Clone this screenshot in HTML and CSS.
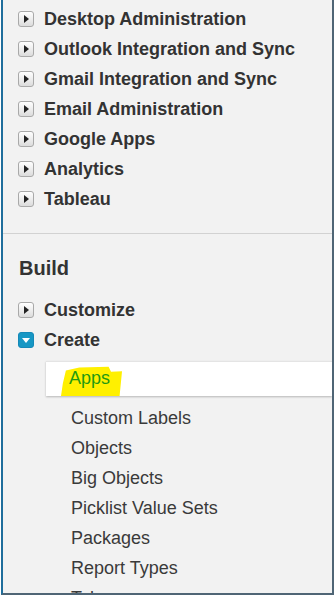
FILE: index.html
```html
<!DOCTYPE html>
<html lang="en">
<head>
    <meta charset="UTF-8">
    <meta name="viewport" content="width=device-width, initial-scale=1.0">
    <title>Setup Menu</title>
    <link rel="stylesheet" href="styles.css">
</head>
<body>
    <div class="panel">
        <ul class="tree">
            <li class="node"><span class="toggle"></span>Desktop Administration</li>
            <li class="node"><span class="toggle"></span>Outlook Integration and Sync</li>
            <li class="node"><span class="toggle"></span>Gmail Integration and Sync</li>
            <li class="node"><span class="toggle"></span>Email Administration</li>
            <li class="node"><span class="toggle"></span>Google Apps</li>
            <li class="node"><span class="toggle"></span>Analytics</li>
            <li class="node"><span class="toggle"></span>Tableau</li>
        </ul>

        <div class="divider"></div>

        <h2 class="group-title">Build</h2>

        <ul class="tree build">
            <li class="node"><span class="toggle"></span>Customize</li>
            <li class="node"><span class="toggle open"></span>Create</li>
        </ul>

        <ul class="sub-list">
            <li class="sub-item selected"><span class="marker">Apps</span></li>
            <li class="sub-item">Custom Labels</li>
            <li class="sub-item">Objects</li>
            <li class="sub-item">Big Objects</li>
            <li class="sub-item">Picklist Value Sets</li>
            <li class="sub-item">Packages</li>
            <li class="sub-item">Report Types</li>
            <li class="sub-item">Tabs</li>
        </ul>
    </div>
</body>
</html>
```

FILE: styles.css
```css
/* 全体 */
body {
    margin: 0;
    padding: 0;
    background-color: #ffffff;
    font-family: "Liberation Sans", Arial, sans-serif;
    color: #333333;
}
.panel {
    box-sizing: border-box;
    width: 333px;
    height: 595px;
    margin-left: 1px;
    padding-top: 4px;
    overflow: hidden;
    background-color: #f2f2f2;
    border-left: 2px solid #1f6e9c;
    border-right: 2px solid #4f6575;
    border-bottom: 2px solid #4f6575;
}
ul {
    list-style: none;
    margin: 0;
    padding: 0;
}

/* ツリー項目 */
.tree {
    padding-left: 15px;
}
.node {
    display: flex;
    align-items: center;
    height: 30px;
    font-size: 18px;
    font-weight: bold;
    color: #333333;
}
.toggle {
    box-sizing: border-box;
    position: relative;
    width: 16px;
    height: 16px;
    margin-right: 10px;
    flex-shrink: 0;
    border: 1px solid #a9a9a9;
    border-radius: 3px;
    background: linear-gradient(#ffffff, #dcdcdc);
}
.toggle::after {
    content: "";
    position: absolute;
    left: 5px;
    top: 3px;
    border-left: 5px solid #222222;
    border-top: 4px solid transparent;
    border-bottom: 4px solid transparent;
}
.toggle.open {
    border-color: #1589b8;
    background: #1797c4;
}
.toggle.open::after {
    left: 3px;
    top: 5px;
    border-top: 5px solid #ffffff;
    border-left: 4px solid transparent;
    border-right: 4px solid transparent;
    border-bottom: none;
}

.divider {
    height: 1px;
    margin-top: 19px;
    background-color: #d2d2d2;
}
.group-title {
    margin: 19px 0 0 0;
    padding-left: 16px;
    font-size: 20px;
    line-height: 30px;
    font-weight: bold;
    color: #333333;
}
.build {
    margin-top: 12px;
}

/* サブメニュー */
.sub-list {
    margin-top: 6px;
}
.sub-item {
    height: 30px;
    line-height: 30px;
    padding-left: 68px;
    font-size: 18px;
    color: #3a3a3a;
}
.sub-item.selected {
    display: flex;
    align-items: flex-end;
    height: 35px;
    margin: 0 0 7px 43px;
    padding-left: 15px;
    background-color: #ffffff;
    border-top: 1px solid #e4e4e4;
    box-shadow: 0 1px 2px rgba(0, 0, 0, 0.25);
    box-sizing: border-box;
}
.marker {
    display: block;
    height: 31px;
    line-height: 27px;
    padding: 0 12px 0 8px;
    color: #1f9a12;
    background-color: #fff000;
    clip-path: polygon(8% 18%, 30% 8%, 78% 6%, 82% 22%, 100% 20%, 96% 100%, 0% 100%, 3% 60%);
}
```
